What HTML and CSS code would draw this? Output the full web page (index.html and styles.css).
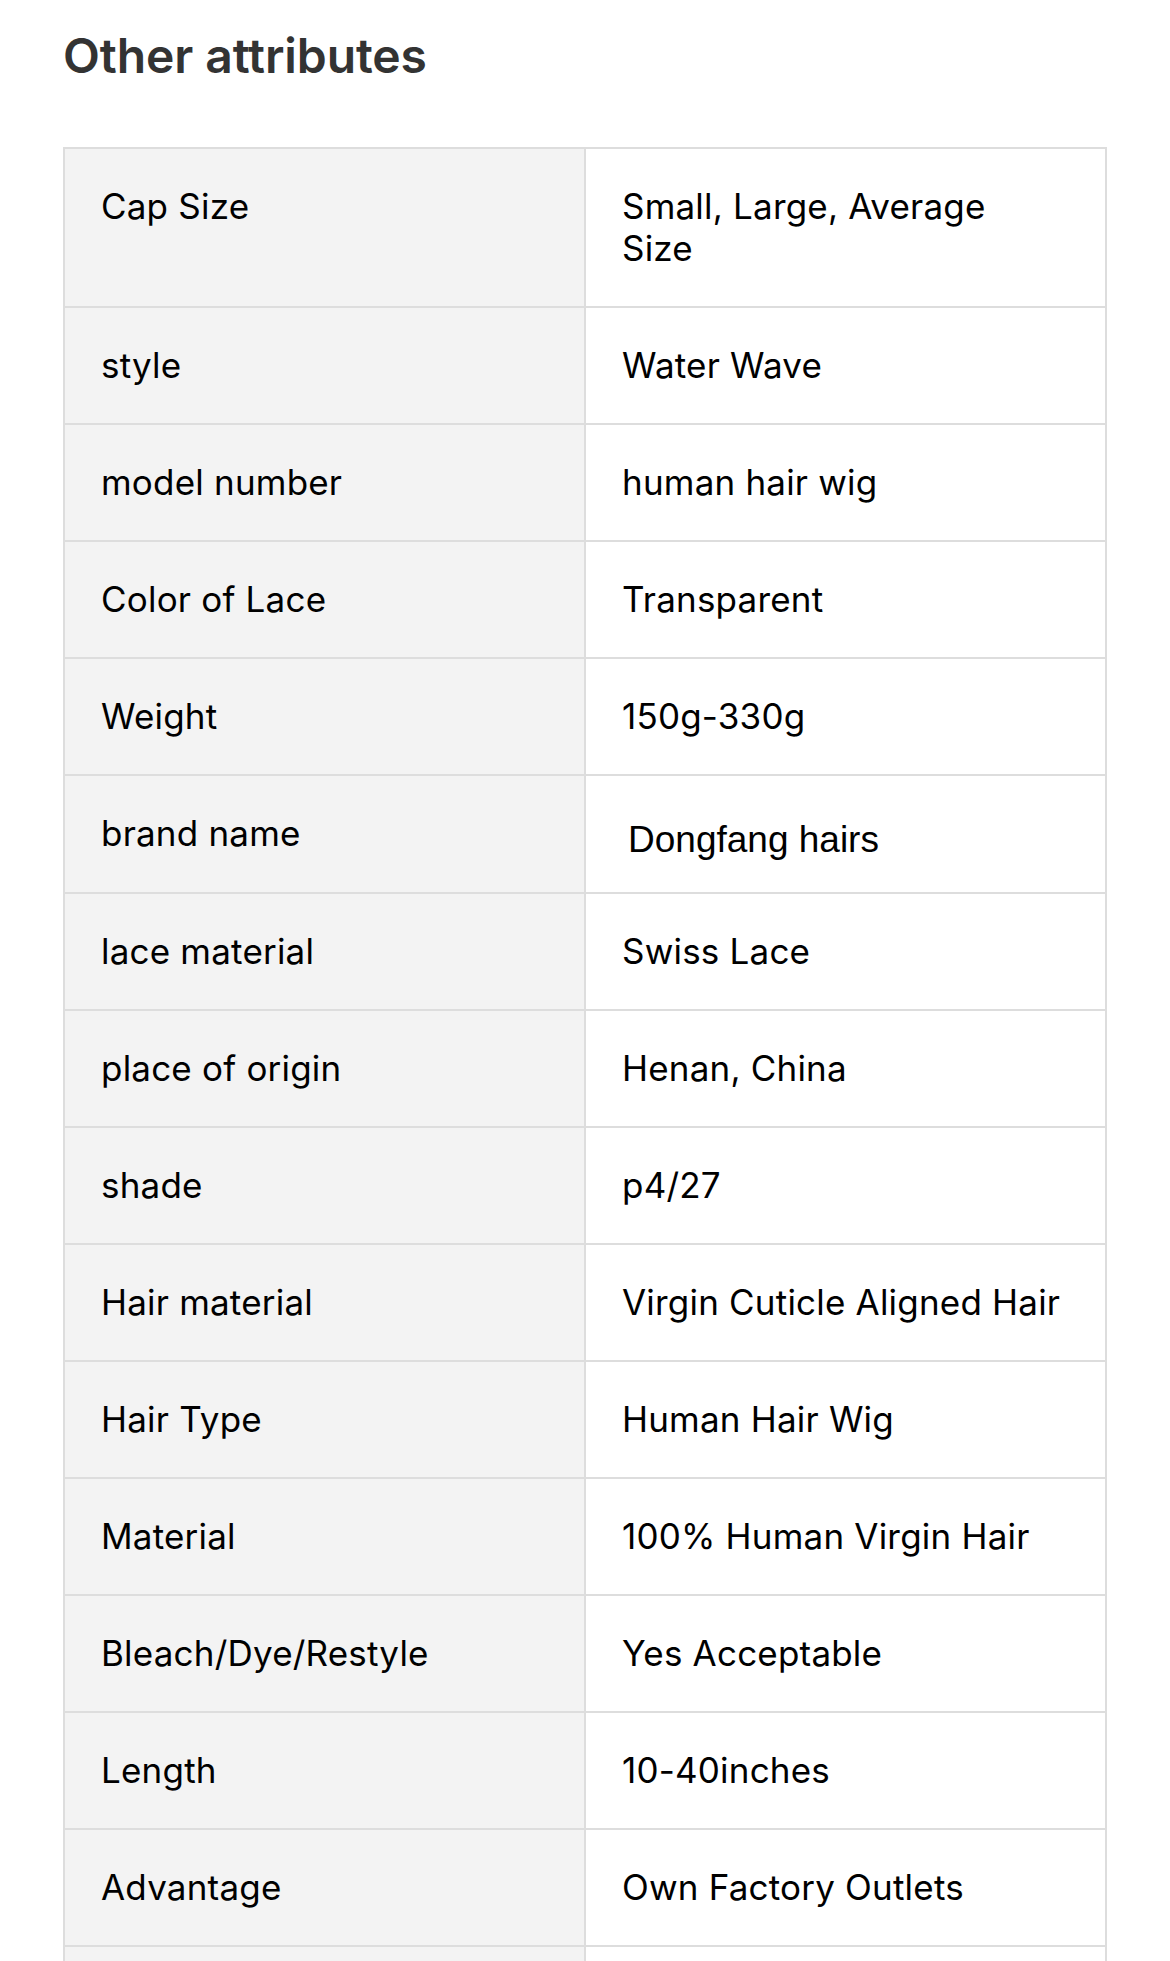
FILE: index.html
```html
<!DOCTYPE html>
<html>
<head>
<meta charset="utf-8">
<link rel="stylesheet" href="styles.css">
</head>
<body>
<div class="page">
  <h2 class="title">Other attributes</h2>
  <table class="attrs">
    <tr><td class="k">Cap Size</td><td class="v">Small, Large, Average<br>Size</td></tr>
    <tr><td class="k">style</td><td class="v">Water Wave</td></tr>
    <tr><td class="k">model number</td><td class="v">human hair wig</td></tr>
    <tr><td class="k">Color of Lace</td><td class="v">Transparent</td></tr>
    <tr><td class="k">Weight</td><td class="v">150g-330g</td></tr>
    <tr><td class="k">brand name</td><td class="v"><span class="alt">Dongfang hairs</span></td></tr>
    <tr><td class="k">lace material</td><td class="v">Swiss Lace</td></tr>
    <tr><td class="k">place of origin</td><td class="v">Henan, China</td></tr>
    <tr><td class="k">shade</td><td class="v">p4/27</td></tr>
    <tr><td class="k">Hair material</td><td class="v">Virgin Cuticle Aligned Hair</td></tr>
    <tr><td class="k">Hair Type</td><td class="v">Human Hair Wig</td></tr>
    <tr><td class="k">Material</td><td class="v">100% Human Virgin Hair</td></tr>
    <tr><td class="k">Bleach/Dye/Restyle</td><td class="v">Yes Acceptable</td></tr>
    <tr><td class="k">Length</td><td class="v">10-40inches</td></tr>
    <tr><td class="k">Advantage</td><td class="v">Own Factory Outlets</td></tr>
    <tr class="tail"><td class="k"></td><td class="v"></td></tr>
  </table>
</div>
</body>
</html>
```

FILE: styles.css
```css
html, body {
  margin: 0;
  padding: 0;
  background: #ffffff;
}
.page {
  padding: 24px 63px 0 63px;
  font-family: Inter, "Noto Sans", sans-serif;
  color: #000;
}
.title {
  margin: 0;
  font-size: 48px;
  line-height: 64px;
  font-weight: 600;
  color: #333333;
  letter-spacing: -0.1px;
}
.attrs {
  margin-top: 59px;
  width: 1044px;
  border-collapse: collapse;
  table-layout: fixed;
}
.attrs td {
  border: 2px solid #dddddd;
  padding: 36px 37px 37px 36px;
  font-size: 35px;
  line-height: 42px;
  vertical-align: top;
  color: #000;
  letter-spacing: 0.2px;
}
.attrs .k {
  background: #f3f3f3;
}
.attrs .v {
  background: #ffffff;
}
.attrs .tail td {
  height: 42px;
}
.alt {
  font-family: "Liberation Sans", Arial, sans-serif;
  font-size: 37px;
  letter-spacing: 0;
  display: inline-block;
  margin-left: 6px;
  position: relative;
  top: 6px;
}
```
